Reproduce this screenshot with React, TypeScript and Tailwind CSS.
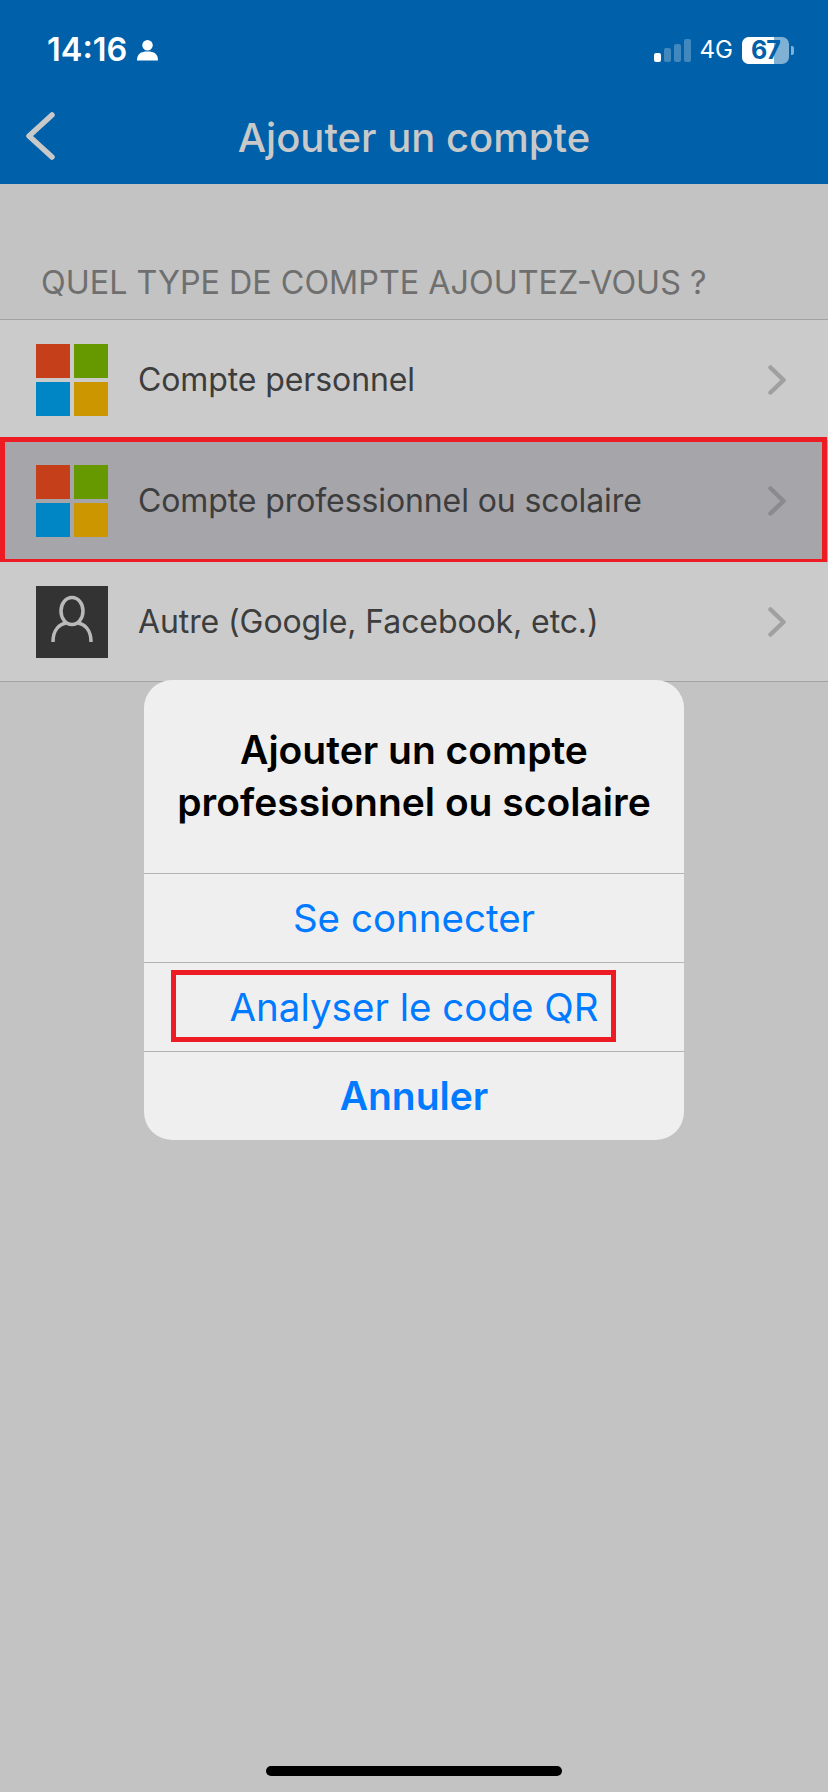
import type { ReactNode } from 'react';

const font = 'font-["Inter","Liberation_Sans",sans-serif]';

function MicrosoftLogo() {
  return (
    <div className="grid h-[72px] w-[72px] shrink-0 grid-cols-2 grid-rows-2 gap-1">
      <div className="bg-[#c43f1a]" />
      <div className="bg-[#669900]" />
      <div className="bg-[#0086c4]" />
      <div className="bg-[#cc9600]" />
    </div>
  );
}

function PersonLogo() {
  return (
    <div className="flex h-[72px] w-[72px] shrink-0 items-center justify-center bg-[#333333]">
      <svg viewBox="0 0 72 72" className="h-[72px] w-[72px]" fill="none" stroke="#b9b9b9" strokeWidth="3.5">
        <ellipse cx="36" cy="25" rx="11" ry="13.5" />
        <path d="M17 56c0-13 7-18 13-19M55 56c0-13-7-18-13-19" />
      </svg>
    </div>
  );
}

function Chevron({ className }: { className: string }) {
  return (
    <svg viewBox="0 0 18 30" className={`h-[30px] w-[18px] ${className}`} fill="none" stroke="currentColor" strokeWidth="4.5" strokeLinecap="round" strokeLinejoin="round">
      <path d="M2.5 2.5L15.5 15L2.5 27.5" />
    </svg>
  );
}

function Row({ icon, label, selected, className }: { icon: ReactNode; label: string; selected?: boolean; className: string }) {
  return (
    <div className={`relative flex items-center pl-[36px] pr-[42px] ${selected ? 'bg-[#a6a5aa]' : 'bg-[#cbcbcb]'} ${className}`}>
      {icon}
      <span className="ml-[30px] flex-1 text-[32px] tracking-[-0.1px] text-[#3d3d3d]">{label}</span>
      <Chevron className={selected ? 'text-[#8b8b8e]' : 'text-[#a0a0a0]'} />
      {selected && <div className="absolute left-0 top-[-3px] h-[127px] w-[827px] border-[5px] border-[#ed1c24]" />}
    </div>
  );
}

function StatusBar() {
  return (
    <div className="flex h-[100px] items-center justify-between pl-[47px] pr-[34px] text-white">
      <div className="flex items-center gap-[10px]">
        <span className="text-[32.5px] font-semibold leading-none">14:16</span>
        <svg viewBox="0 0 22 22" className="h-[22px] w-[21px]" fill="white">
          <circle cx="11" cy="6" r="5.5" />
          <path d="M0 22c0-7 4-9.5 11-9.5S22 15 22 22z" />
        </svg>
      </div>
      <div className="flex items-center">
        <div className="flex items-end gap-[3px]">
          <div className="h-[9px] w-[7px] rounded-[2px] bg-white" />
          <div className="h-[14px] w-[7px] rounded-[2px] bg-white/25" />
          <div className="h-[18px] w-[7px] rounded-[2px] bg-white/25" />
          <div className="h-[23px] w-[7px] rounded-[2px] bg-white/25" />
        </div>
        <span className="ml-[9px] text-[24px] leading-none">4G</span>
        <div className="relative ml-[9px] flex h-[27px] w-[47px] rounded-[7px] bg-white/50">
          <div className="h-full w-[32px] rounded-l-[7px] bg-white" />
          <span className="absolute inset-0 flex items-center justify-center text-[25px] font-bold leading-none tracking-[-1px] text-[#0060a9]">67</span>
        </div>
        <div className="ml-[2px] h-[9px] w-[3px] rounded-r-[2px] bg-white/50" />
      </div>
    </div>
  );
}

function Dialog() {
  return (
    <div className="absolute left-[144px] top-[680px] flex h-[460px] w-[540px] flex-col overflow-hidden rounded-[28px] bg-[#efefef] text-center">
      <div className="flex h-[193px] items-start justify-center pt-[44px] text-[39px] font-semibold leading-[52px] text-black">
        <div>
          Ajouter un compte
          <br />
          professionnel ou scolaire
        </div>
      </div>
      <div className="flex h-[89px] items-center justify-center border-t border-[#b3b3b3] pt-[1px] text-[38.5px] text-[#007aff]">
        Se connecter
      </div>
      <div className="relative flex h-[89px] items-center justify-center border-t border-[#b3b3b3] pt-[1px] text-[38.5px] text-[#007aff]">
        Analyser le code QR
        <div className="absolute left-[27px] top-[7px] h-[72px] w-[445px] border-[5px] border-[#ed1c24]" />
      </div>
      <div className="flex h-[89px] items-center justify-center border-t border-[#b3b3b3] pt-[1px] text-[39px] font-semibold text-[#007aff]">
        Annuler
      </div>
    </div>
  );
}

export default function App() {
  return (
    <div className={`relative flex h-[1792px] w-[828px] flex-col overflow-hidden bg-[#c3c3c3] ${font}`}>
      <header className="h-[184px] bg-[#0060a9]">
        <StatusBar />
        <div className="relative flex h-[84px] items-center justify-center pb-[9px]">
          <svg viewBox="0 0 30 48" className="absolute left-[25px] top-[12px] h-[48px] w-[30px]" fill="none" stroke="#c9c9c9" strokeWidth="5.5" strokeLinecap="round" strokeLinejoin="round">
            <path d="M27 3L4 24L27 45" />
          </svg>
          <h1 className="text-[40px] font-medium text-[#c9c9c9]">Ajouter un compte</h1>
        </div>
      </header>

      <div className="flex h-[135px] items-end pb-[12px] pl-[41px] text-[32.3px] text-[#6f6f6f]">
        QUEL TYPE DE COMPTE AJOUTEZ-VOUS ?
      </div>

      <div className="border-y border-[#a3a3a3]">
        <Row icon={<MicrosoftLogo />} label="Compte personnel" className="h-[120px]" />
        <Row icon={<MicrosoftLogo />} label="Compte professionnel ou scolaire" selected className="h-[122px]" />
        <Row icon={<PersonLogo />} label="Autre (Google, Facebook, etc.)" className="h-[119px] pt-[1px]" />
      </div>

      <Dialog />

      <div className="absolute bottom-[16px] left-[266px] h-[10px] w-[296px] rounded-full bg-black" />
    </div>
  );
}
